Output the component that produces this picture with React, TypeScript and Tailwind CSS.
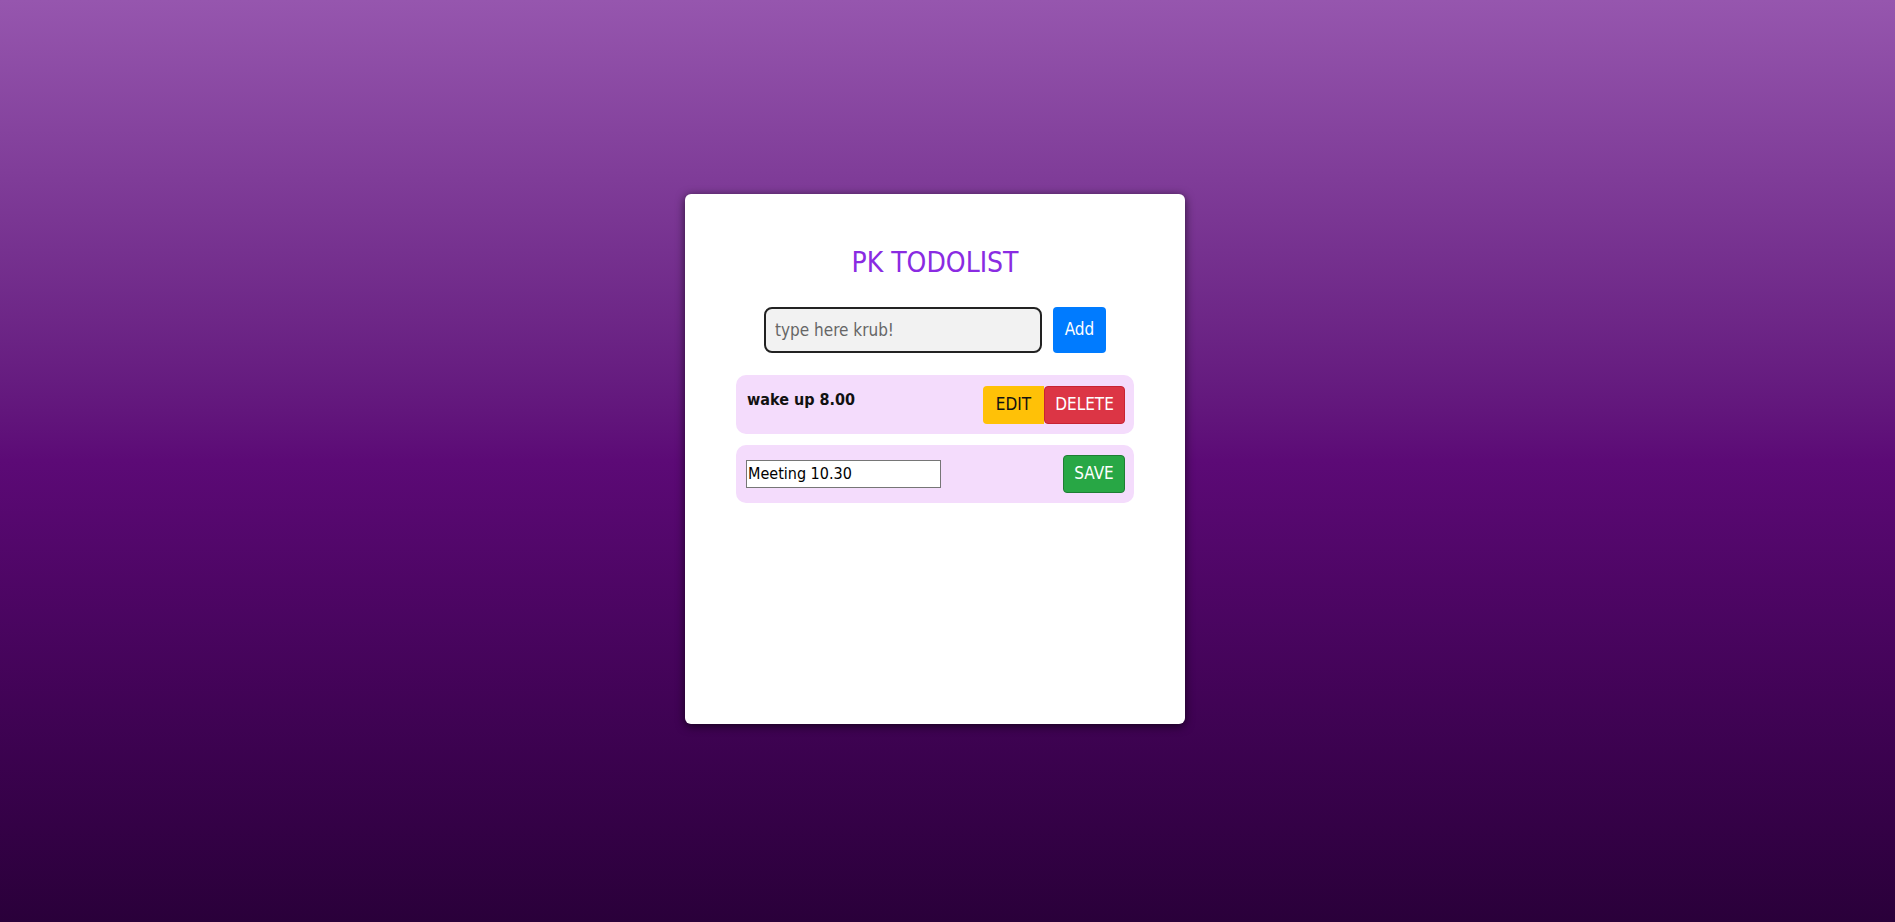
export default function App() {
    return (
        <div className="min-h-screen w-full flex items-center justify-center pr-[25px] pb-[5px] bg-gradient-to-b from-[#9656ae] via-[#5c0a76] to-[#2a003a] font-['Tahoma','DejaVu_Sans_Condensed','DejaVu_Sans',sans-serif]">
            {/* Card */}
            <div className="w-[500px] h-[530px] bg-white rounded-md shadow-[0_2px_10px_rgba(0,0,0,0.65)] px-[51px] pt-[48px]">
                <h1 className="text-center text-[28px] text-[#8a2be2] leading-normal">PK TODOLIST</h1>

                {/* Add row */}
                <div className="mt-[23px] flex justify-center gap-[11px]">
                    <input
                        className="w-[278px] h-[46px] px-[9px] bg-[#f2f2f2] border-2 border-[#222] rounded-lg text-[17px] text-[#555] placeholder:text-[#666] outline-none"
                        placeholder="type here krub!"
                    />
                    <button className="w-[53px] h-[46px] bg-[#007bff] text-white text-[17px] rounded">Add</button>
                </div>

                {/* Items */}
                <div className="mt-[22px] flex flex-col gap-[11px]">
                    <div className="flex items-start justify-between bg-[#f4dcfc] rounded-[10px] pt-[11px] pb-[10px] pl-[11px] pr-[9px]">
                        <span className="mt-[2px] text-[16px] font-bold text-[#111]">wake up 8.00</span>
                        <div className="flex">
                            <button className="w-[61px] h-[38px] bg-[#ffc107] text-[#111] text-[17px] rounded-l">EDIT</button>
                            <button className="w-[81px] h-[38px] bg-[#dc3545] text-white text-[17px] rounded border border-[#c82333]">DELETE</button>
                        </div>
                    </div>
                    <div className="flex items-center justify-between bg-[#f4dcfc] rounded-[10px] py-[10px] pl-[10px] pr-[9px]">
                        <input
                            className="w-[195px] h-[28px] px-[1px] bg-white border border-[#767676] text-[16px] text-black outline-none"
                            defaultValue="Meeting 10.30"
                        />
                        <button className="w-[62px] h-[38px] bg-[#28a745] text-white text-[17px] rounded border border-[#1e7e34]">SAVE</button>
                    </div>
                </div>
            </div>
        </div>
    );
}
